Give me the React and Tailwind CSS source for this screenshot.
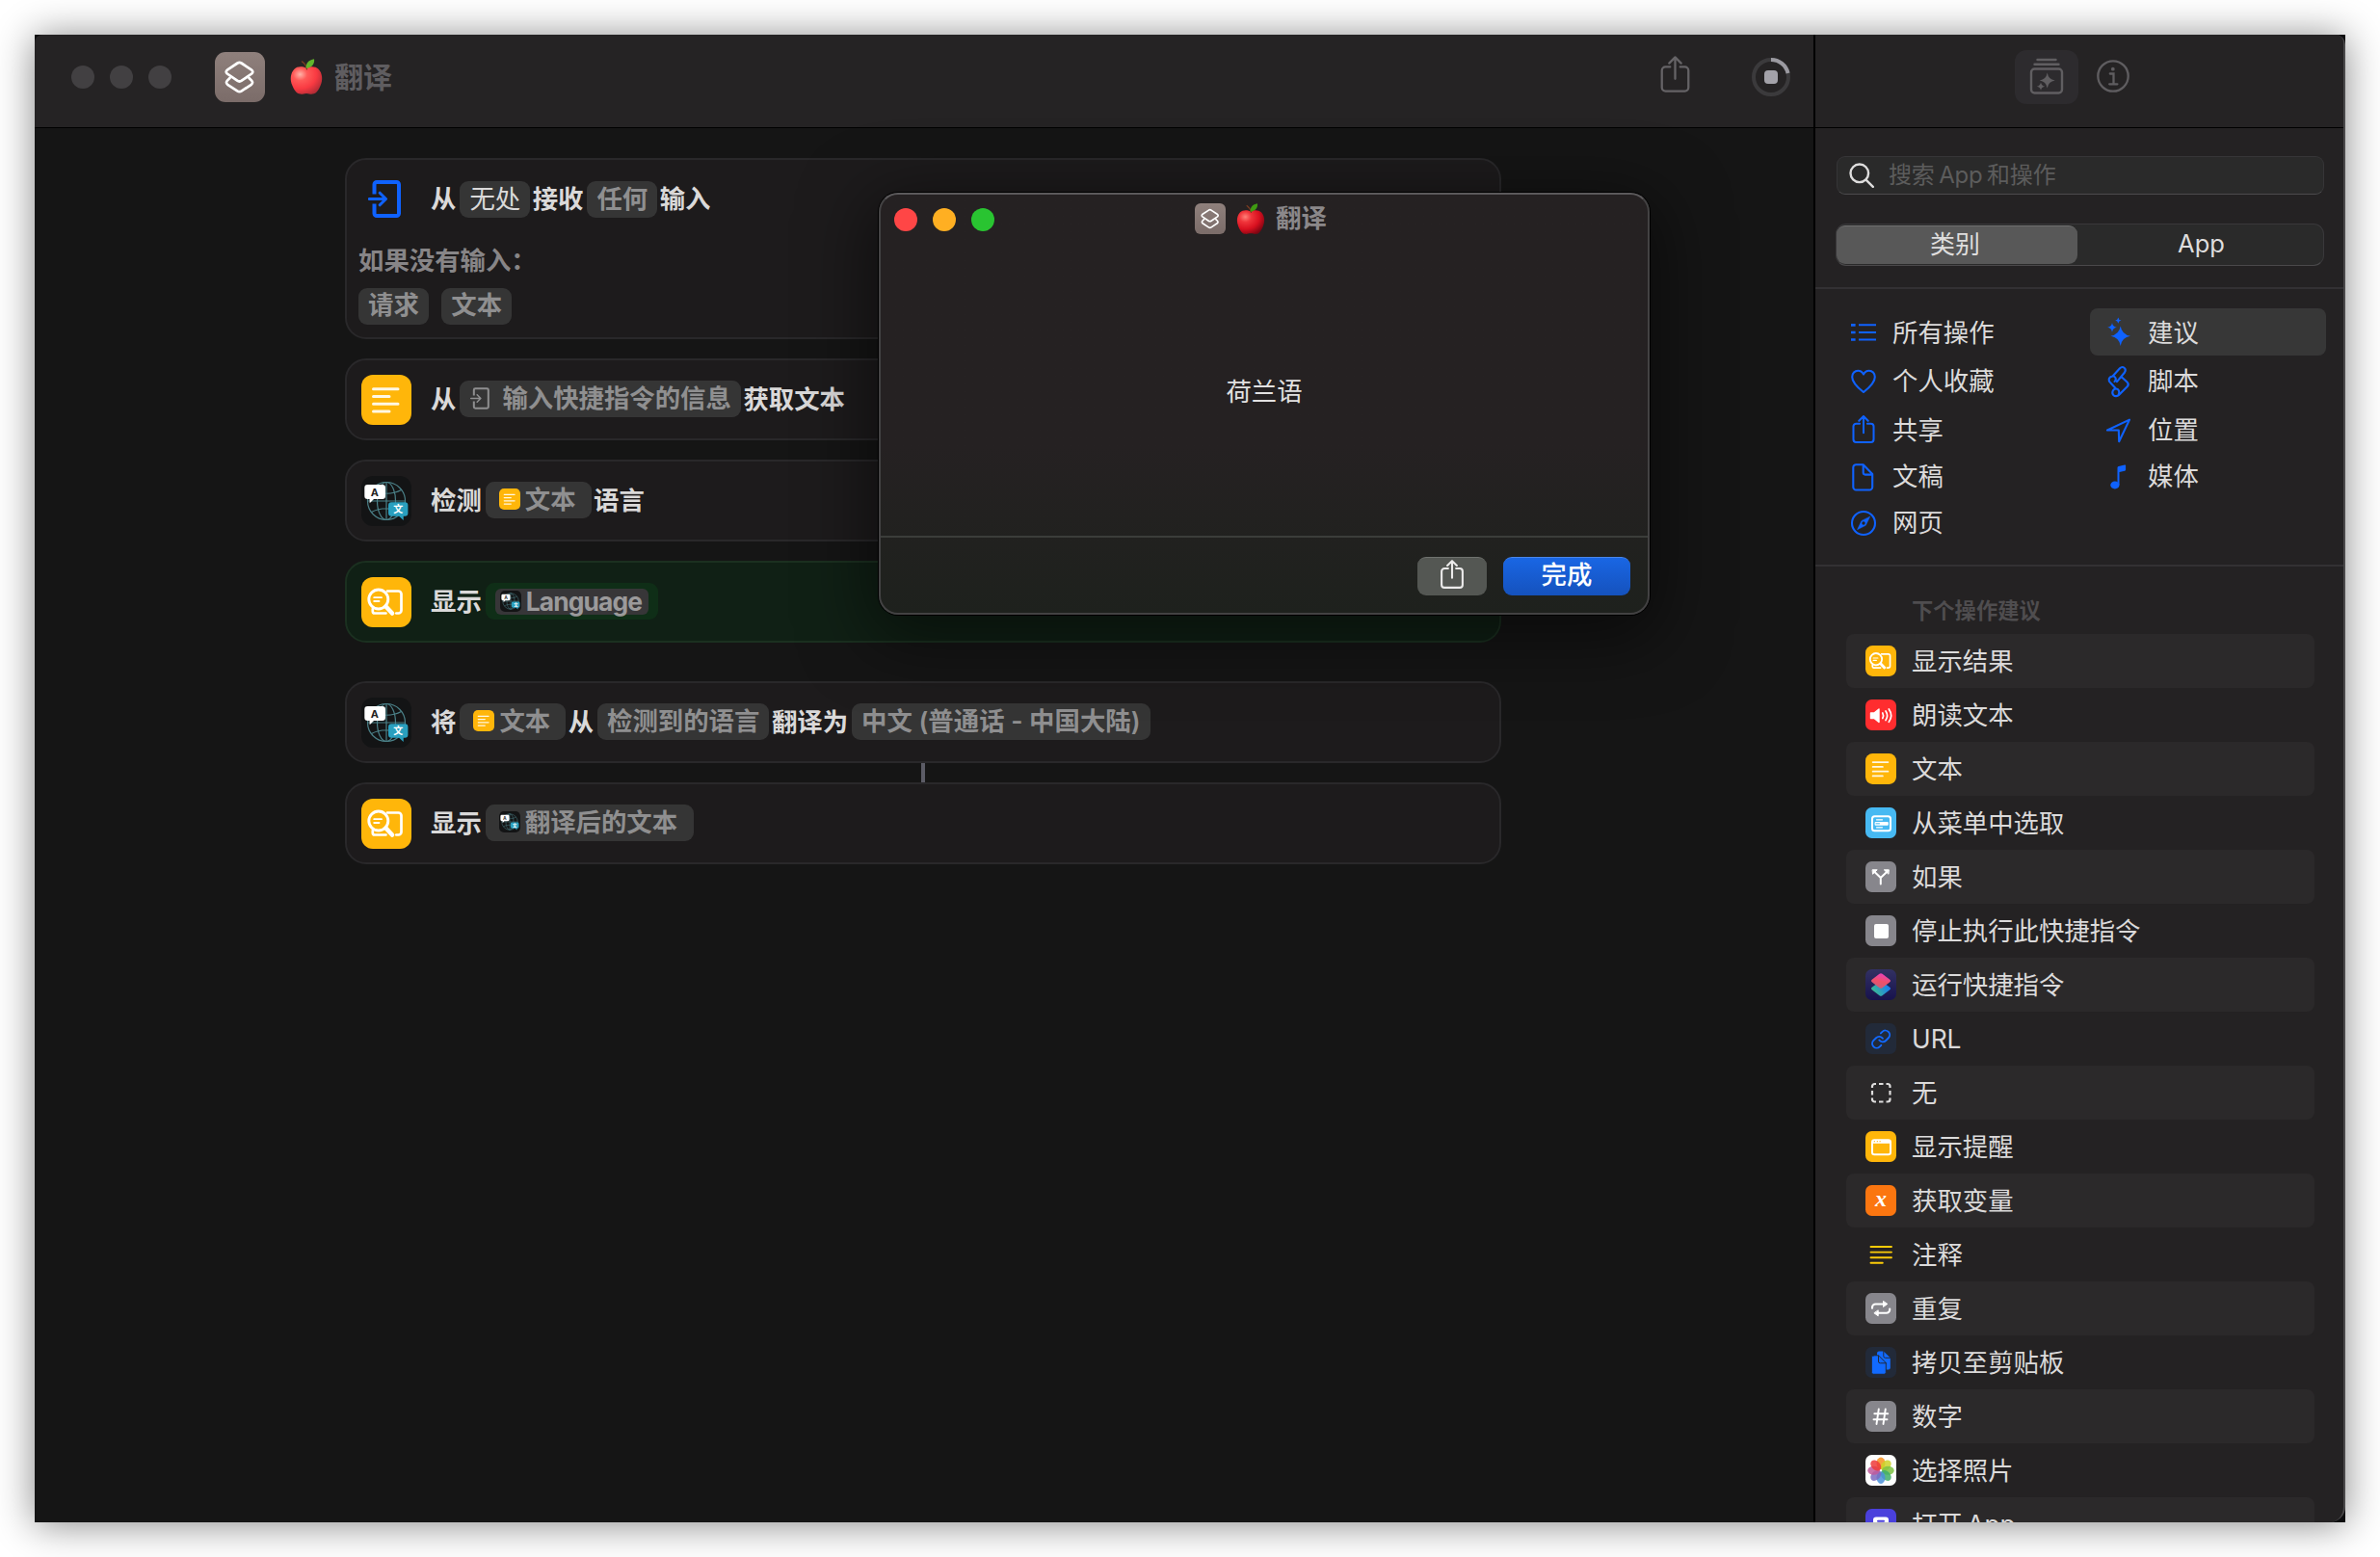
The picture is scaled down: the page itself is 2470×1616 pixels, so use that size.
const star = (x, y, r) => {
  const k = r * 0.2;
  return `M${x} ${y - r}Q${x + k * 0.7} ${y - k * 0.7} ${x + r} ${y}Q${x + k * 0.7} ${y + k * 0.7} ${x} ${y + r}Q${x - k * 0.7} ${y + k * 0.7} ${x - r} ${y}Q${x - k * 0.7} ${y - k * 0.7} ${x} ${y - r}Z`;
};

function Share({ className, stroke = 2.4 }) {
  return (
    <svg viewBox="0 0 32 40" className={className} fill="none" stroke="currentColor" strokeWidth={stroke} strokeLinecap="round" strokeLinejoin="round">
      <path d="M10.500 12H5.500a4 4 0 0 0-4 4v18.500a4 4 0 0 0 4 4h21a4 4 0 0 0 4-4V16a4 4 0 0 0-4-4h-5M16 25V2M9.500 8L16 1.500 22.500 8" />
    </svg>
  );
}

function Apple({ className, id, dark }) {
  return (
    <svg viewBox="0 0 36 40" className={className}>
      <defs>
        <radialGradient id={id} cx="0.3" cy="0.28" r="0.8">
          <stop offset="0" stopColor={dark ? "#ff8078" : "#ffb3a8"} />
          <stop offset="0.28" stopColor={dark ? "#f0343a" : "#ff5a58"} />
          <stop offset="0.65" stopColor={dark ? "#d8101f" : "#f93a42"} />
          <stop offset="1" stopColor={dark ? "#7c0512" : "#b32c36"} />
        </radialGradient>
      </defs>
      <path d="M17.500 10C14 8.200 8 7.800 4.500 11.500.5 16-.2 23 2.500 29c2 5 5 9.500 8.500 9.500 2.500.6 4-.7 7-.7s4.500 1.300 7 .7c3.500 0 6.500-4.500 8.500-9.500C36.200 23 35.500 16 31.500 11.500 28 7.800 21.500 8.200 17.500 10Z" fill={`url(#${id})`} />
      <path d="M18.500 11.500C18 8 16 5 13.200 3" stroke="#7a3c22" strokeWidth="1.400" fill="none" strokeLinecap="round" />
      <path d="M17.800 10.500C17 5 20.500 1.200 26.500.3 27.200 6 23.500 10 17.800 10.500Z" fill={dark ? "#3f9a12" : "#62b52c"} />
    </svg>
  );
}

function ShortcutBadge({ className }) {
  return (
    <div className={`bg-linear-to-b from-[#8f807c] to-[#7b6c69] ${className}`}>
      <svg viewBox="0 0 52 52" className="h-full w-full" fill="none" stroke="#fff" strokeWidth="2.700" strokeLinejoin="round" strokeLinecap="round">
        <path d="M23.500 11.500 13.200 18.300q-2.800 2-.4 4.200l10.400 7.200q2.300 1.600 4.600 0l10.400-7.200q2.400-2.200-.4-4.200L27.500 11.500q-2-1.200-4 0Z" />
        <path d="M15.500 27l-2.600 2.600q-2 2.200.3 4.200l10 6.600q2.300 1.500 4.600 0l10-6.600q2.300-2 .3-4.200L35.500 27" />
      </svg>
    </div>
  );
}

function TextIcon({ className }) {
  return (
    <svg viewBox="0 0 52 52" className={className}>
      <rect width="52" height="52" rx="12" fill="#ffb60a" />
      <path d="M12.500 14.800h25.500M12.500 22.600h16.500M12.500 30.300h25.500M12.500 38h16.500" stroke="#fff8e4" strokeWidth="3" strokeLinecap="round" />
    </svg>
  );
}

function ResultIcon({ className }) {
  return (
    <svg viewBox="0 0 52 52" className={className} fill="none" stroke="#fff" strokeLinecap="round" strokeLinejoin="round">
      <rect width="52" height="52" rx="12" fill="#ffb60a" stroke="none" />
      <path d="M27 14.500h11.500a3 3 0 0 1 3 3v17a3 3 0 0 1-3 3h-2.200M11.800 33v2.500a2 2 0 0 0 2 2h11.700" strokeWidth="2.700" />
      <circle cx="17.800" cy="23" r="10" strokeWidth="2.900" />
      <path d="M13.200 21.200h7.800M13.200 25h5.300" strokeWidth="1.800" />
      <path d="M25.500 30.500l6.500 7" strokeWidth="4.600" />
    </svg>
  );
}

function TranslateIcon({ className }) {
  return (
    <svg viewBox="0 0 52 52" className={className}>
      <rect width="52" height="52" rx="12" fill="#131415" />
      <g fill="none" stroke="#4b8088" strokeWidth="1.200">
        <circle cx="26" cy="26" r="19.500" />
        <ellipse cx="26" cy="26" rx="9.500" ry="19.500" />
        <path d="M26 6.500v39M6.500 26h39M10.500 14.500c9 5 22 5 31 0M10.500 37.500c9-5 22-5 31 0" />
      </g>
      <path d="M6.500 9h15.300a3.200 3.200 0 0 1 3.200 3.200v8.600a3.200 3.200 0 0 1-3.200 3.200H13l-4.300 4.200L8.500 24h-2a3.200 3.200 0 0 1-3.200-3.200v-8.600A3.200 3.200 0 0 1 6.500 9Z" fill="#fff" />
      <path d="M31.200 27.300h14a3.200 3.200 0 0 1 3.200 3.200v8a3.200 3.200 0 0 1-3.200 3.200h-1.500v4.300l-4.500-4.300h-8a3.200 3.200 0 0 1-3.200-3.200v-8a3.200 3.200 0 0 1 3.200-3.200Z" fill="#2a9fbe" />
      <text x="13.800" y="20.700" textAnchor="middle" className="fill-[#222] font-sans text-[11px] font-bold">A</text>
      <text x="38.200" y="38.200" textAnchor="middle" className="fill-white text-[10px] font-bold">文</text>
    </svg>
  );
}

function InputIcon({ className, stroke = 4 }) {
  return (
    <svg viewBox="0 0 34 39" className={className} fill="none" stroke="currentColor" strokeWidth={stroke} strokeLinecap="butt" strokeLinejoin="round">
      <path d="M6.500 14.500V4.500a2.500 2.500 0 0 1 2.500-2.500H29.500a2.500 2.500 0 0 1 2.500 2.500V34.500a2.500 2.500 0 0 1-2.500 2.500H9a2.500 2.500 0 0 1-2.500-2.500V24.500" />
      <path d="M1.200 19.500H18M12.200 13.200l6.300 6.300-6.300 6.300" strokeWidth={stroke * 0.75} strokeLinecap="round" />
    </svg>
  );
}

function Pill({ children, className = "px-[10px] text-[#8f8f90]" }) {
  return (
    <span className={`mr-[2.500px] ml-[4px] flex h-[38px] items-center rounded-[9px] bg-[#353535] first:ml-0 ${className}`}>
      <span className="-mt-[2px] flex items-center">{children}</span>
    </span>
  );
}

function Card({ icon, children, green, className = "" }) {
  return (
    <div className={`flex h-[85px] items-center rounded-[22px] border-2 pl-[15px] ${green ? "border-[#1b3020] bg-[#102015]" : "border-[#29282a] bg-[#1d1b1c]"} ${className}`}>
      <div className="mr-[20px] h-[52px] w-[52px] shrink-0">{icon}</div>
      <div className="-mt-px flex items-center leading-[36px]">{children}</div>
    </div>
  );
}

const categories = [
  ["所有操作", "list"],
  ["建议", "sparkles"],
  ["个人收藏", "heart"],
  ["脚本", "scroll"],
  ["共享", "share"],
  ["位置", "location"],
  ["文稿", "doc"],
  ["媒体", "music"],
  ["网页", "safari"],
];

function CategoryIcon({ name }) {
  const line = { fill: "none", stroke: "currentColor", strokeWidth: 2.1, strokeLinecap: "round", strokeLinejoin: "round" };
  if (name === "share") return <Share className="-mt-[3px] h-[29px] w-[24px]" stroke={2.8} />;
  return (
    <svg viewBox="0 0 26 32" className="h-[32px] w-[26px] overflow-visible" {...line}>
      {name === "list" && (
        <g strokeLinecap="butt" strokeWidth="2">
          <path d="M8 8.300h18M8 16h18M8 23.500h18" />
          <path d="M0 8.300h4.600M0 16h4.600M0 23.500h4.600" strokeWidth="2.700" />
        </g>
      )}
      {name === "sparkles" && <path d={star(14.7, 19.8, 10.2) + star(6, 10.8, 4.9) + star(12.3, 3.6, 3.2)} fill="currentColor" stroke="none" />}
      {name === "heart" && <path d="M13 27C8.500 23.500 1.200 18 1.200 11.300 1.200 7.500 4 4.700 7.200 4.700c2.600 0 4.600 1.500 5.800 3.800 1.200-2.300 3.200-3.800 5.800-3.800 3.200 0 6 2.800 6 6.600C24.800 18 17.500 23.500 13 27Z" />}
      {name === "scroll" && (
        <path d="M6.500 10.500 14 2.300c3-3 7.500.2 5 4.200L11 16.200M6.500 10.500C2 11.500 1.500 15 4.500 17.500L10 23.500M6.500 10.500c3-.5 4.500 3.500 2 5.500M15.500 11l6 5.500c1.800 1.700 1.600 3 .4 4.500L13 30c-1.400 1.400-4.200 1.500-5.500.2-2.600-2.600-.5-6.700 2.500-6.700 3 0 4.300 3.600 2.400 6.800" />
      )}
      {name === "location" && <path d="M24 4.600 1 15.500h11.800l.4 11.700Z" />}
      {name === "doc" && <path d="M5.300 3.200h7.400l9.500 9.800v13.500a3 3 0 0 1-3 3H5.300a3 3 0 0 1-3-3V6.200a3 3 0 0 1 3-3ZM12.700 3.400v8.200a2 2 0 0 0 2 2h7.300" />}
      {name === "music" && (
        <g fill="currentColor" stroke="none">
          <path d="M11.500 6.500q0-1.200 1.200-1.500l6.400-1.500q1-.2 1 .8v4.200q0 .9-1 1.200L13.500 11V24h-2Z" />
          <ellipse cx="8.900" cy="24.500" rx="4.600" ry="3.900" />
        </g>
      )}
      {name === "safari" && (
        <>
          <circle cx="13" cy="16" r="12" />
          <path d="M19.700 9.300 15.300 18.300 6.500 22.700 10.800 13.800Z" fill="currentColor" strokeWidth="0.500" />
          <circle cx="13" cy="16" r="1.700" fill="#242223" stroke="none" />
        </>
      )}
    </svg>
  );
}

const actions = [
  ["显示结果", "result"],
  ["朗读文本", "speak"],
  ["文本", "text"],
  ["从菜单中选取", "menu"],
  ["如果", "if"],
  ["停止执行此快捷指令", "stop"],
  ["运行快捷指令", "run"],
  ["URL", "url"],
  ["无", "none"],
  ["显示提醒", "alert"],
  ["获取变量", "variable"],
  ["注释", "comment"],
  ["重复", "repeat"],
  ["拷贝至剪贴板", "copy"],
  ["数字", "number"],
  ["选择照片", "photos"],
  ["打开 App", "app"],
];

const tileColor = {
  speak: "#ff2d2f",
  menu: "#47b9f2",
  if: "#87868c",
  stop: "#87868c",
  url: "#222a39",
  alert: "#ffb60a",
  variable: "#fb7610",
  repeat: "#87868c",
  copy: "#222a39",
  number: "#87868c",
  photos: "#ffffff",
  app: "#4a40dc",
};

const petals = ["#f7901e", "#cdd42a", "#7cc242", "#3fae6a", "#4a90d9", "#7c6bc0", "#c05a9c", "#ef3b3a"];

function ActionIcon({ name }) {
  if (name === "result") return <ResultIcon className="h-[32px] w-[32px]" />;
  if (name === "text") return <TextIcon className="h-[32px] w-[32px]" />;
  return (
    <svg viewBox="0 0 32 32" className="h-[32px] w-[32px]" fill="none" stroke="#fff" strokeWidth="2" strokeLinecap="round" strokeLinejoin="round">
      {tileColor[name] && <rect width="32" height="32" rx="6.500" fill={tileColor[name]} stroke="none" />}
      {name === "speak" && (
        <>
          <path d="M5.500 14h3.500l5-4v13.500l-5-4H5.500Z" fill="#fff" strokeWidth="1.400" />
          <path d="M17.800 14c1 1.800 1 3.700 0 5.500M21 12c2 3 2 6.500 0 9.500M24.300 10c3 4.200 3 9 0 13.300" strokeWidth="1.700" />
        </>
      )}
      {name === "menu" && (
        <>
          <rect x="7" y="9.300" width="19" height="15" rx="2.500" />
          <path d="M11.500 12.800h6M11.500 20.800h6" strokeWidth="1.200" />
          <rect x="9.600" y="15" width="14.200" height="3.700" rx="1" fill="#fff" stroke="none" />
          <path d="M11 16.800h3.500" stroke="#47b9f2" strokeWidth="1" />
        </>
      )}
      {name === "if" && (
        <>
          <path d="M15.800 23.500V17L9.500 11M15.800 17l6.300-6" />
          <path d="M7.500 8.800h4.700L7.800 13ZM24 8.800h-4.700L23.700 13Z" fill="#fff" strokeWidth="1" />
        </>
      )}
      {name === "stop" && <rect x="9" y="9" width="15" height="15" rx="2" fill="#fff" stroke="none" />}
      {name === "run" && (
        <>
          <defs>
            <linearGradient id="runBg" x1="0" y1="0" x2="0" y2="1">
              <stop offset="0" stopColor="#323163" />
              <stop offset="1" stopColor="#17124d" />
            </linearGradient>
            <linearGradient id="runTop" x1="0.700" y1="0" x2="0.400" y2="1">
              <stop offset="0" stopColor="#e83fc0" />
              <stop offset="0.550" stopColor="#f0506a" />
              <stop offset="1" stopColor="#c85f78" />
            </linearGradient>
            <linearGradient id="runBottom" x1="0" y1="0.700" x2="1" y2="0.300">
              <stop offset="0" stopColor="#3fc08a" />
              <stop offset="1" stopColor="#1878f8" />
            </linearGradient>
          </defs>
          <rect width="32" height="32" rx="6.500" fill="url(#runBg)" stroke="none" />
          <path d="M14.500 13 7 18.500q-2 1.500 0 3l7.500 5.800q1.500 1 3 0L25 21.500q2-1.500 0-3L17.500 13Z" fill="url(#runBottom)" stroke="none" />
          <path d="M14.500 4.700 7 10.500q-2 1.500 0 3l7.500 5.800q1.500 1 3 0L25 13.500q2-1.500 0-3L17.500 4.700q-1.500-1-3 0Z" fill="url(#runTop)" stroke="none" />
        </>
      )}
      {name === "url" && (
        <g transform="translate(5.200 5.700) scale(.91)" stroke="#1269ff" strokeWidth="2.100">
          <path d="M10 13a5 5 0 0 0 7.540.54l3-3a5 5 0 0 0-7.070-7.070l-1.720 1.710" />
          <path d="M14 11a5 5 0 0 0-7.540-.54l-3 3a5 5 0 0 0 7.070 7.070l1.710-1.710" />
        </g>
      )}
      {name === "none" && (
        <path d="M7 11V9.500A2.500 2.500 0 0 1 9.500 7H11M14 7h4.500M21.500 7H23a2.500 2.500 0 0 1 2.500 2.500V11M25.500 14V18.500M25.500 21.500V23a2.500 2.500 0 0 1-2.500 2.500H21.500M18.500 25.500H14M11 25.500H9.500A2.500 2.500 0 0 1 7 23V21.500M7 18.500V14" stroke="#dedddd" strokeWidth="2.200" strokeLinecap="butt" />
      )}
      {name === "alert" && (
        <>
          <rect x="7" y="9.200" width="19" height="15" rx="2.200" />
          <path d="M7 11h19" strokeWidth="3.600" strokeLinecap="butt" />
          <path d="M8.800 10.700h1M11.800 10.700h1M14.600 10.700h1" stroke="#ffb60a" strokeWidth="1.200" strokeLinecap="butt" />
        </>
      )}
      {name === "variable" && <text x="16" y="22" textAnchor="middle" className="fill-white stroke-none text-[24px] font-bold italic [font-family:'Liberation_Serif',serif]">x</text>}
      {name === "comment" && <path d="M5.500 8h21.500M5.500 13.600h21.500M5.500 19.200h21.500M5.500 24.800h12.300" stroke="#fccc08" strokeWidth="1.900" />}
      {name === "repeat" && (
        <>
          <path d="M7 15.800v-.8a3.500 3.500 0 0 1 3.500-3.500h8.500M25.200 16.500v.8a3.500 3.500 0 0 1-3.500 3.500h-8.500" strokeWidth="2.100" />
          <path d="M18.500 8.800v5.600l4-2.800ZM13.200 18.200v5.600l-4-2.800Z" fill="#fff" strokeWidth="1" />
        </>
      )}
      {name === "copy" && (
        <>
          <path d="M14 4.500h4.800l7 6.800v10.200a2 2 0 0 1-2 2h-9.800a2 2 0 0 1-2-2V6.500a2 2 0 0 1 2-2Z" fill="#116aff" stroke="none" />
          <path d="M18.800 4.500v5a1.800 1.800 0 0 0 1.800 1.800h5.200" stroke="#222a39" strokeWidth="1" />
          <path d="M8.300 8.800h5.200l7.800 7.800v9.700a2 2 0 0 1-2 2h-11a2 2 0 0 1-2-2V10.800a2 2 0 0 1 2-2Z" fill="#116aff" stroke="#222a39" strokeWidth="1" />
          <path d="M13.500 9v6a1.800 1.800 0 0 0 1.800 1.800h6" stroke="#222a39" strokeWidth="1" />
        </>
      )}
      {name === "number" && <path d="M13.800 8.500 11.500 24M20.800 8.500 18.500 24M9.300 13.300h14M8.500 19.300h14" strokeWidth="1.900" />}
      {name === "photos" &&
        petals.map((c, i) => <ellipse key={c} cx="16" cy="8.800" rx="4.500" ry="6.300" fill={c} fillOpacity="0.850" stroke="none" transform={`rotate(${i * 45} 16 16.200)`} />)}
      {name === "app" && (
        <>
          <rect x="8" y="8.500" width="16" height="18" rx="3" fill="#fff" stroke="none" />
          <path d="M13 12.800h6" stroke="#4a40dc" strokeWidth="2" />
        </>
      )}
    </svg>
  );
}

function Sidebar() {
  return (
    <aside className="flex w-[550px] shrink-0 flex-col rounded-tr-[10px] rounded-br-[16px] border-r-2 border-[#4a494a] bg-[#242223]">
      <div className="flex h-[97px] shrink-0 rounded-tr-[8px] border-b border-black bg-[#252324] pt-[16px] pl-[207px]">
        <div className="flex h-[56px] w-[66px] items-center justify-center rounded-[12px] bg-[#2d2b2e] text-[#605e61]">
          <svg viewBox="0 0 36 38" className="-mt-[2px] h-[38px] w-[36px]" fill="none" stroke="currentColor" strokeWidth="2.400" strokeLinecap="round" strokeLinejoin="round">
            <path d="M8.500 2h19M5.500 6.800h25" />
            <rect x="2" y="11.500" width="32" height="25" rx="3.500" />
            <path d={star(18.7, 23.5, 8) + star(12, 29.8, 4.2)} fill="currentColor" stroke="none" />
          </svg>
        </div>
        <svg viewBox="0 0 34 34" className="mt-[10px] ml-[19px] h-[34px] w-[34px] text-[#5f5d60]" fill="none" stroke="currentColor" strokeWidth="2.300" strokeLinecap="round">
          <circle cx="17" cy="17" r="15.700" />
          <path d="M13.800 14.500h3.700v10.700M13.200 25.300h8.200" />
          <circle cx="16.800" cy="9.700" r="1.900" fill="currentColor" stroke="none" />
        </svg>
      </div>

      <div className="mt-[29px] mr-[20px] ml-[22px] flex h-[40px] shrink-0 items-center rounded-[9px] border border-[#363537] border-b-[#4c4b4d] bg-[#2a2a2a] pl-[12px]">
        <svg viewBox="0 0 26 26" className="h-[26px] w-[26px]" fill="none" stroke="#dedddd" strokeWidth="2.400" strokeLinecap="round">
          <circle cx="10.800" cy="10.800" r="9.300" />
          <path d="M17.800 17.800l7 7" />
        </svg>
        <span className="ml-[15px] text-[24px] tracking-[-0.200px] [word-spacing:-2px] text-[#5c5c5c]">搜索 App 和操作</span>
      </div>

      <div className="mt-[30px] mr-[20px] ml-[21px] flex h-[44px] shrink-0 items-center rounded-[11px] border border-[#39383a] border-b-[#4a494b] bg-[#2a2a2a] text-[26px] text-[#dedddd]">
        <div className="flex h-[40px] w-[250px] items-center justify-center rounded-[9px] border-t border-[#707070] bg-[#585858] pr-[4px] pb-[2px]">类别</div>
        <div className="flex flex-1 items-center justify-center pb-px pl-[2px] text-[25.500px]">App</div>
      </div>

      <div className="mt-[22px] h-[2px] shrink-0 bg-[#333133]" />

      <div className="mt-[20px] ml-[22px] grid shrink-0 grid-cols-[263px_245px] grid-rows-[50px_52px_50px_46px_50px] text-[26.400px] text-[#dbdada]">
        {categories.map(([label, icon], i) => (
          <div key={label} className={`flex items-center odd:pl-[15px] even:pl-[17px] ${icon === "sparkles" ? "h-[49px] rounded-[8px] bg-[#373737]" : ""}`}>
            <div className="flex w-[26px] shrink-0 justify-center text-[#0f62ff]">
              <CategoryIcon name={icon} />
            </div>
            <span className={i < 2 ? "ml-[17px] pt-[2px]" : "ml-[17px]"}>{label}</span>
          </div>
        ))}
      </div>

      <div className="mt-[18px] h-[2px] shrink-0 bg-[#333133]" />

      <div className="mt-[22px] flex h-[48px] shrink-0 items-center pl-[100px] text-[22.300px] font-bold text-[#4f4d4f]">下个操作建议</div>

      <div className="ml-[32px] min-h-0 w-[486px] flex-1 overflow-hidden text-[26.400px] text-[#dbdada]">
        {actions.map(([label, icon]) => (
          <div key={label} className="flex h-[56px] items-center rounded-[8px] pl-[20px] odd:bg-[#2b292a]">
            <ActionIcon name={icon} />
            <span className="ml-[16px] pt-[2px] [word-spacing:-3px]">{label}</span>
          </div>
        ))}
      </div>
    </aside>
  );
}

function Dialog() {
  return (
    <div className="absolute top-[164px] left-[876px] flex h-[438px] w-[800px] flex-col rounded-[20px] border-2 border-[#434243] border-t-[#5b595b] bg-linear-to-b from-[#252122] from-60% to-[#1e211d] shadow-[0_0_0_1px_#000,0_16px_70px_10px_rgba(0,0,0,0.500)]">
      <div className="relative flex h-[52px] items-center justify-center pr-[7px] pb-[2px]">
        <div className="absolute top-[14px] left-[14px] flex gap-[16px]">
          <div className="h-[24px] w-[24px] rounded-full bg-[#ff4646]" />
          <div className="h-[24px] w-[24px] rounded-full bg-[#ffaf22]" />
          <div className="h-[24px] w-[24px] rounded-full bg-[#29c431]" />
        </div>
        <ShortcutBadge className="h-[32px] w-[32px] rounded-[6px]" />
        <Apple id="appleSmall" dark className="ml-[11px] h-[33px] w-[30px]" />
        <span className="ml-[11px] text-[26.400px] font-bold text-[#8b888a]">翻译</span>
      </div>
      <div className="flex flex-1 items-center justify-center pt-[3px] text-[26.400px] text-[#e2e1e1]">荷兰语</div>
      <div className="flex h-[80px] items-center justify-end gap-[17px] border-t-2 border-[#3b3d3a] pr-[18px] pt-px">
        <div className="flex h-[40px] w-[72px] items-center justify-center rounded-[9px] border-t border-[#70726f] bg-[#545753] text-[#ecebeb]">
          <Share className="-mt-[5px] h-[30px] w-[24px]" stroke={2.8} />
        </div>
        <div className="flex h-[40px] w-[132px] items-center justify-center rounded-[9px] border-t border-[#4a86ea] bg-linear-to-b from-[#1966e4] to-[#1552bd] pb-[3px] text-[26.400px] font-medium text-white">完成</div>
      </div>
    </div>
  );
}

export default function App() {
  return (
    <div className="h-[1616px] w-[2470px] overflow-hidden bg-white p-[36px] [font-family:Inter,'Noto_Sans_CJK_SC',sans-serif]">
      <div className="relative flex h-[1544px] w-[2398px] bg-[#0c0c0e] shadow-[0_2px_38px_rgba(0,0,0,0.480)]">
        <main className="flex w-[1846px] shrink-0 flex-col rounded-tl-[8px] bg-[#151515]">
          <header className="flex h-[97px] shrink-0 rounded-tl-[8px] border-b border-black bg-[#252324]">
            <div className="flex h-[88px] flex-1 items-center pl-[38px]">
              <div className="flex gap-[16px]">
                <div className="h-[24px] w-[24px] rounded-full bg-[#424042]" />
                <div className="h-[24px] w-[24px] rounded-full bg-[#424042]" />
                <div className="h-[24px] w-[24px] rounded-full bg-[#424042]" />
              </div>
              <ShortcutBadge className="ml-[45px] h-[52px] w-[52px] rounded-[11px]" />
              <Apple id="appleLarge" className="ml-[25px] h-[38px] w-[36px]" />
              <span className="ml-[11px] text-[30px] font-bold text-[#5f5d60]">翻译</span>
            </div>
            <div className="flex h-[88px] items-center pr-[24px]">
              <Share className="mr-[64px] -mt-[6px] h-[38px] w-[31px] text-[#656366]" />
              <svg viewBox="0 0 40 40" className="h-[40px] w-[40px]" fill="none" strokeWidth="4">
                <circle cx="20" cy="20" r="18" stroke="#3b3a3c" />
                <path d="M20 2A18 18 0 0 1 37.600 16" stroke="#9b9aa1" />
                <rect x="13" y="13" width="14" height="14" rx="4" fill="#a3a2a9" />
              </svg>
            </div>
          </header>

          <div className="ml-[322px] flex w-[1200px] flex-col pt-[31px] text-[26.400px] font-semibold text-[#dad9d9]">
            <section className="mb-[20px] flex h-[188px] flex-col rounded-[22px] border-2 border-[#29282a] bg-[#1d1b1c] pt-[21px] pl-[12px]">
              <div className="flex h-[39px] items-center pl-[10px] leading-[36px]">
                <InputIcon className="h-[39px] w-[34px] text-[#0f62ff]" />
                <span className="-mt-[2px] ml-[31px]">从</span>
                <Pill className="px-[10px] font-normal">无处</Pill>
                <span className="-mt-[2px]">接收</span>
                <Pill>任何</Pill>
                <span className="-mt-[2px]">输入</span>
              </div>
              <div className="mt-[25px] h-[38px] leading-[38px] text-[#878587]">如果没有输入：</div>
              <div className="mt-[10px] flex gap-[7px]">
                <Pill>请求</Pill>
                <Pill>文本</Pill>
              </div>
            </section>

            <Card className="mb-[20px]" icon={<TextIcon className="h-full w-full" />}>
              <span className="-mt-px">从</span>
              <Pill>
                <InputIcon className="mr-[13px] ml-px h-[23px] w-[20px]" stroke={3.4} />
                输入快捷指令的信息
              </Pill>
              <span className="-mt-px">获取文本</span>
            </Card>

            <Card className="mb-[20px]" icon={<TranslateIcon className="h-full w-full" />}>
              <span className="-mt-px">检测</span>
              <Pill className="pr-[16px] pl-[14px] text-[#8f8f90]">
                <TextIcon className="mr-[5px] h-[22px] w-[22px]" />
                文本
              </Pill>
              <span className="-mt-px">语言</span>
            </Card>

            <Card green className="mb-[40px]" icon={<ResultIcon className="h-full w-full" />}>
              <span className="-mt-px">显示</span>
              <div className="mx-[4px] flex h-[38px] items-center rounded-[9px] bg-[#0f2e17] px-[10px]">
                <div className="flex h-[27px] items-center rounded-[6px] bg-[#373638] pr-[7px] pl-[5px] font-bold tracking-[-0.900px] text-[#9b9a9b]">
                  <TranslateIcon className="mr-[5px] h-[22px] w-[22px]" />
                  Language
                </div>
              </div>
            </Card>

            <Card icon={<TranslateIcon className="h-full w-full" />}>
              <span className="-mt-px">将</span>
              <Pill className="pr-[16px] pl-[14px] text-[#8f8f90]">
                <TextIcon className="mr-[5px] h-[22px] w-[22px]" />
                文本
              </Pill>
              <span className="-mt-px">从</span>
              <Pill>检测到的语言</Pill>
              <span className="-mt-px">翻译为</span>
              <Pill>中文 (普通话 - 中国大陆)</Pill>
            </Card>

            <div className="h-[20px] w-[4px] self-center bg-[#5c5c66]" />

            <Card icon={<ResultIcon className="h-full w-full" />}>
              <span className="-mt-px">显示</span>
              <Pill className="pr-[17px] pl-[14px] text-[#8f8f90]">
                <TranslateIcon className="mr-[5px] h-[22px] w-[22px]" />
                翻译后的文本
              </Pill>
            </Card>
          </div>
        </main>
        <div className="w-[2px] shrink-0 bg-black" />
        <Sidebar />
        <Dialog />
      </div>
    </div>
  );
}
